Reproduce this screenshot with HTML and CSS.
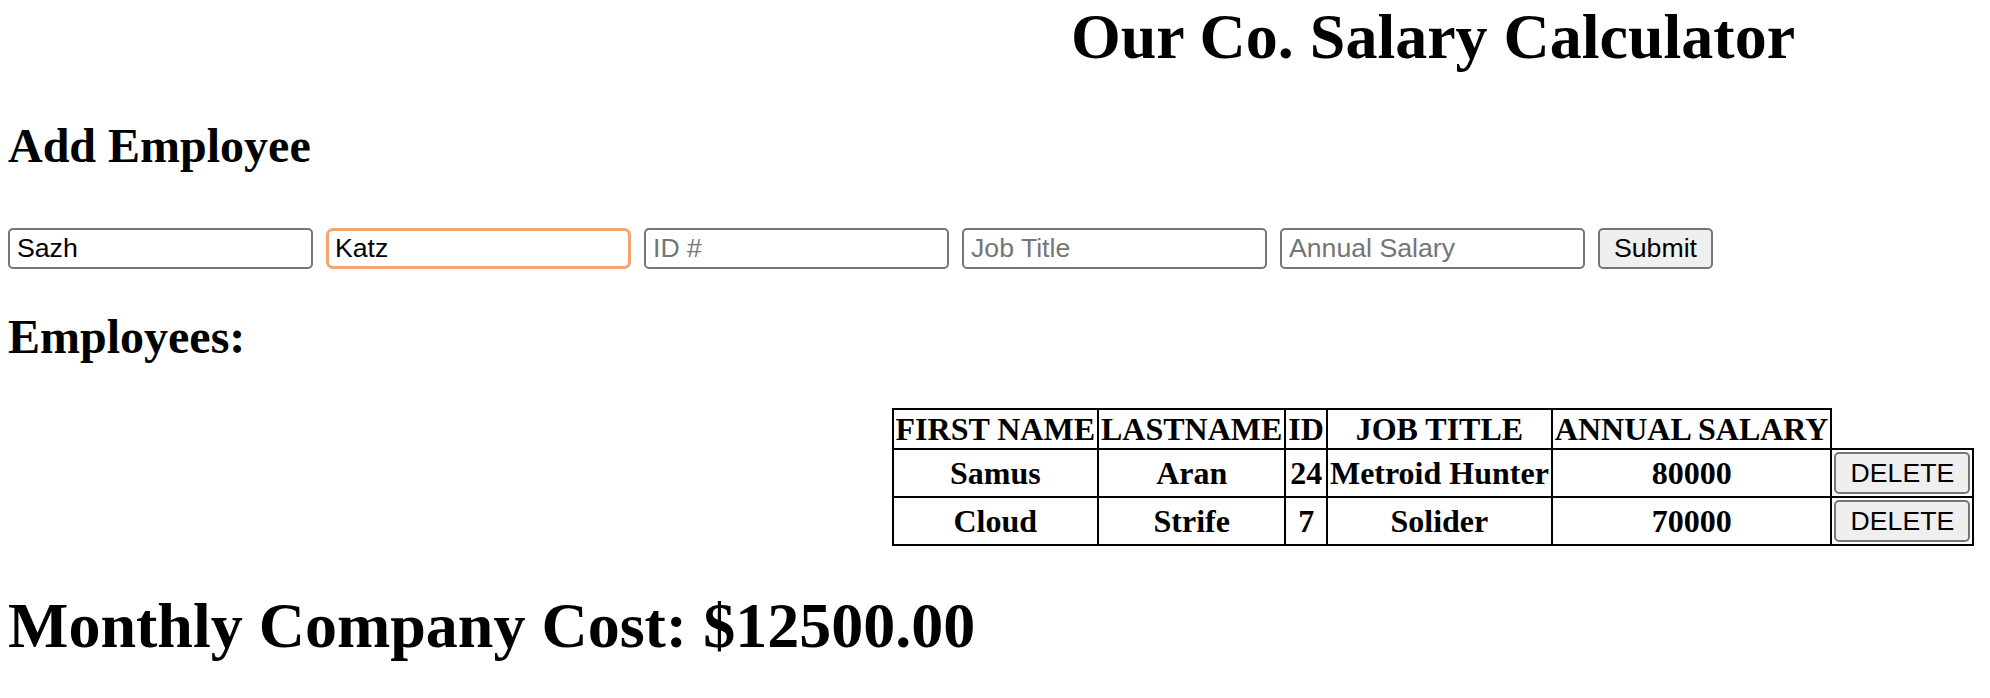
FILE: index.html
```html
<!DOCTYPE html>
<html lang="en">
<head>
<meta charset="utf-8">
<title>Our Co. Salary Calculator</title>
<link rel="stylesheet" href="styles.css">
</head>
<body>
<div class="page">
  <h1 class="title">Our Co. Salary Calculator</h1>
  <h2 class="section add-title">Add Employee</h2>
  <form class="emp-form">
    <input class="field" type="text" placeholder="First Name" value="Sazh">
    <input class="field field-focused" type="text" placeholder="Last Name" value="Katz">
    <input class="field" type="text" placeholder="ID #">
    <input class="field" type="text" placeholder="Job Title">
    <input class="field" type="text" placeholder="Annual Salary">
    <button class="btn submit-btn" type="button">Submit</button>
  </form>
  <h2 class="section emp-title">Employees:</h2>
  <table class="emp-table">
    <thead>
      <tr>
        <th>FIRST NAME</th>
        <th>LASTNAME</th>
        <th>ID</th>
        <th>JOB TITLE</th>
        <th>ANNUAL SALARY</th>
      </tr>
    </thead>
    <tbody>
      <tr>
        <td>Samus</td>
        <td>Aran</td>
        <td>24</td>
        <td>Metroid Hunter</td>
        <td>80000</td>
        <td class="del-cell"><button class="btn del-btn" type="button">DELETE</button></td>
      </tr>
      <tr>
        <td>Cloud</td>
        <td>Strife</td>
        <td>7</td>
        <td>Solider</td>
        <td>70000</td>
        <td class="del-cell"><button class="btn del-btn" type="button">DELETE</button></td>
      </tr>
    </tbody>
  </table>
  <h1 class="total">Monthly Company Cost: $12500.00</h1>
</div>
</body>
</html>
```
FILE: styles.css
```css
html {
  overflow: hidden;
  background: #ffffff;
}

body {
  margin: 0;
  padding: 0 8px;
  font-family: "Liberation Serif", "Times New Roman", serif;
  color: #000000;
}

.page {
  width: 2850px;
}

.title {
  margin: 0;
  font-size: 64px;
  line-height: 74px;
  font-weight: bold;
  text-align: center;
}

.section {
  margin: 0;
  font-size: 48px;
  line-height: 55px;
  font-weight: bold;
}

.add-title {
  margin-top: 44px;
}

.emp-form {
  display: flex;
  align-items: center;
  gap: 13px;
  margin: 55px 0 0;
}

.field {
  box-sizing: border-box;
  width: 305px;
  height: 41px;
  margin: 0;
  padding: 0 7px;
  border: 2px solid #767676;
  border-radius: 5px;
  background: #ffffff;
  font-family: "Liberation Sans", Arial, sans-serif;
  font-size: 26.67px;
  color: #000000;
  outline: none;
}

.field::placeholder {
  color: #757575;
}

.field-focused {
  border: 3px solid #f4a46f;
  border-radius: 7px;
  padding: 0 6px;
}

.btn {
  box-sizing: border-box;
  margin: 0;
  height: 41px;
  border: 2px solid #767676;
  border-radius: 5px;
  background: #efefef;
  font-family: "Liberation Sans", Arial, sans-serif;
  font-size: 26.67px;
  color: #000000;
}

.submit-btn {
  width: 115px;
  padding: 0 12px;
}

.emp-title {
  margin-top: 40px;
}

.emp-table {
  margin: 44px auto 0;
  border-collapse: collapse;
}

.emp-table th,
.emp-table td {
  border: 2px solid #000000;
  padding: 2px;
  font-size: 32px;
  line-height: 34px;
  font-weight: bold;
  text-align: center;
  vertical-align: middle;
}

.del-btn {
  display: block;
  width: 136px;
  height: 42px;
  padding: 0 12px;
}

.total {
  margin: 43px 0 0;
  font-size: 64px;
  line-height: 74px;
  font-weight: bold;
}
```
